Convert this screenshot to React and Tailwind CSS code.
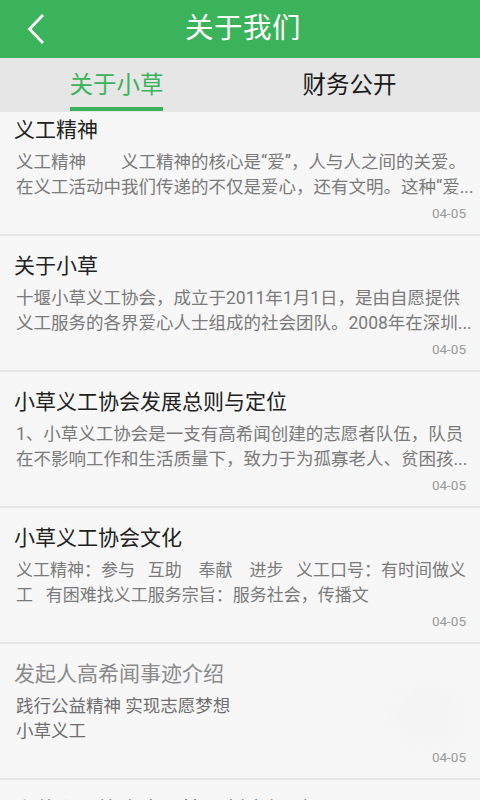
import React from 'react';

const items = [
  {
    title: '义工精神',
    lines: ['义工精神　　义工精神的核心是“爱”，人与人之间的关爱。', '在义工活动中我们传递的不仅是爱心，还有文明。这种“爱...'],
    date: '04-05',
  },
  {
    title: '关于小草',
    lines: ['十堰小草义工协会，成立于2011年1月1日，是由自愿提供', '义工服务的各界爱心人士组成的社会团队。2008年在深圳...'],
    date: '04-05',
  },
  {
    title: '小草义工协会发展总则与定位',
    lines: ['1、小草义工协会是一支有高希闻创建的志愿者队伍，队员', '在不影响工作和生活质量下，致力于为孤寡老人、贫困孩...'],
    date: '04-05',
  },
  {
    title: '小草义工协会文化',
    lines: ['义工精神：参与   互助    奉献    进步   义工口号：有时间做义', '工   有困难找义工服务宗旨：服务社会，传播文'],
    date: '04-05',
    small: true,
  },
  {
    title: '发起人高希闻事迹介绍',
    lines: ['践行公益精神 实现志愿梦想', '小草义工'],
    date: '04-05',
    muted: true,
  },
  {
    title: '小草义工协会会员管理制度细则',
    lines: ['', ''],
    date: '04-05',
  },
];

function Item({ title, lines, date, muted, small }) {
  return (
    <div className="relative border-b-2 border-[#e6e6e6] pl-[14px] pr-[14px] pt-[16px] pb-[13px]">
      {muted && (
        <div className="absolute left-[392px] top-[36px] w-[70px] h-[70px] rounded-full bg-[#f0f0f0] blur-md opacity-50" />
      )}
      <div className={`relative text-[21px] leading-[28px] ${muted ? 'text-[#8a8a8a]' : 'text-[#222222]'}`}>{title}</div>
      <div className={`relative mt-[6px] pl-[2px] -mr-[10px] leading-[25px] h-[50px] overflow-hidden whitespace-pre ${small ? 'text-[17px]' : 'text-[17.5px]'} ${muted ? 'text-[#6e6e6e]' : 'text-[#7a7a7a]'}`}>
        {lines.map((l, i) => <div key={i} className="h-[25px]">{l}</div>)}
      </div>
      <div className="relative mt-[5px] text-right text-[13.5px] leading-[16px] text-[#9a9a9a]">{date}</div>
    </div>
  );
}

export default function App() {
  return (
    <div className="w-[480px] h-[800px] overflow-hidden flex flex-col bg-[#f7f7f7]" style={{ fontFamily: "Roboto, 'Noto Sans CJK SC', sans-serif" }}>
      {/* header */}
      <div className="relative h-[58px] shrink-0 bg-[#3ab35a] flex items-center justify-center">
        <button className="absolute left-[20px] top-[10px] w-[32px] h-[38px] flex items-center justify-center" aria-label="back">
          <svg width="20" height="30" viewBox="0 0 20 30" fill="none">
            <path d="M16 2 L3.5 15 L16 28" stroke="white" strokeWidth="2.8" strokeLinecap="square" strokeLinejoin="miter" />
          </svg>
        </button>
        <h1 className="pl-[6px] text-white text-[28.5px] leading-none font-normal tracking-[0.5px]">关于我们</h1>
      </div>

      {/* tabs */}
      <div className="h-[54px] shrink-0 bg-[#e6e6e6] grid grid-cols-2 pr-[14px]">
        <div className="flex justify-center">
          <div className="flex flex-col items-center">
            <div className="flex-1 flex items-center pt-[6px] text-[23.5px] text-[#3ab35a]">关于小草</div>
            <div className="h-[4px] w-[93px] bg-[#3ab35a] mb-[1px]" />
          </div>
        </div>
        <div className="flex justify-center">
          <div className="flex items-center pt-[6px] pb-[5px] text-[23.5px] text-[#1a1a1a]">财务公开</div>
        </div>
      </div>

      {/* list */}
      <div className="flex-1 overflow-hidden">
        <div className="-mt-[12px]">
          {items.map(it => <Item key={it.title} {...it} />)}
        </div>
      </div>
    </div>
  );
}
